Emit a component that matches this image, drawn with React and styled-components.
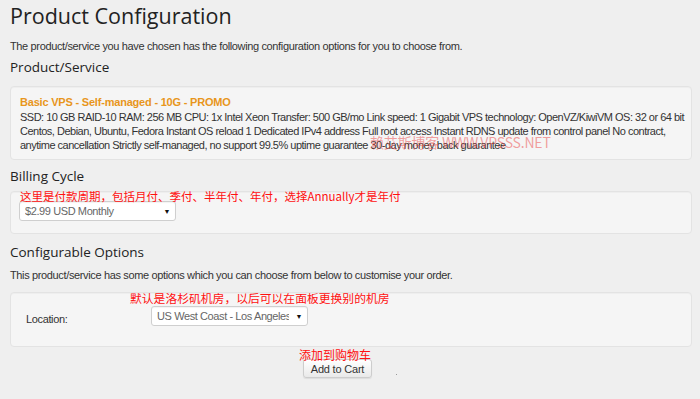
import React from "react";
import styled, { createGlobalStyle } from "styled-components";

const Global = createGlobalStyle`
  html, body { margin: 0; padding: 0; background: #efefef; }
  body { font-family: "Liberation Sans", Arial, sans-serif; font-size: 11px; color: #333; }
`;

const Page = styled.div`
  position: relative;
  width: 700px;
  height: 399px;
  box-sizing: border-box;
  padding: 0 8px 0 10px;
  overflow: hidden;
  letter-spacing: -0.36px;
`;

const Title = styled.h1`
  margin: 0;
  padding-top: 2px;
  height: 30px;
  line-height: 28px;
  font-family: "Open Sans", sans-serif;
  font-weight: 400;
  font-size: 21.5px;
  letter-spacing: 0;
  color: #222;
`;

const Para = styled.p`
  margin: ${(p) => p.$mt || 0}px 0 0;
  line-height: 14px;
  font-size: 11px;
  color: #333;
`;

const Heading = styled.h2`
  margin: ${(p) => p.$mt || 0}px 0 0;
  line-height: 18px;
  font-family: "Open Sans", sans-serif;
  font-weight: 400;
  font-size: 13.5px;
  letter-spacing: 0;
  color: #222;
`;

const Panel = styled.div`
  margin-top: ${(p) => p.$mt || 0}px;
  box-sizing: border-box;
  height: ${(p) => p.$h}px;
  background: #f5f5f5;
  border: 1px solid #e3e3e3;
  border-radius: 4px;
  padding: ${(p) => p.$pad};
  overflow: hidden;
  box-shadow: inset 0 1px 1px rgba(0, 0, 0, 0.03);
`;

const ProductName = styled.div`
  font-weight: bold;
  color: #e8961c;
  line-height: 15px;
  letter-spacing: -0.2px;
`;

const Desc = styled.div`
  line-height: 14px;
  white-space: nowrap;
  letter-spacing: -0.5px;
`;

const Select = styled.div`
  box-sizing: border-box;
  width: ${(p) => p.$w}px;
  height: 20px;
  background: #fff;
  border: 1px solid #cfcfcf;
  border-radius: 3px;
  display: flex;
  align-items: center;
  justify-content: space-between;
  padding: 0 5px 0 5px;
  font-size: 11px;
  color: #666;
  box-shadow: inset 0 1px 1px rgba(0,0,0,0.05);
`;

const SelText = styled.span`
  overflow: hidden;
  white-space: nowrap;
  letter-spacing: -0.4px;
  width: ${(p) => p.$w}px;
`;

const Arrow = styled.span`
  font-size: 7px;
  color: #111;
`;

const OptionRow = styled.div`
  display: flex;
  align-items: center;
`;

const Label = styled.span`
  width: 125px;
  padding-left: 15px;
  padding-top: 5px;
  color: #333;
`;

const Actions = styled.div`
  display: flex;
  justify-content: center;
  padding-right: 27px;
  margin-top: 12px;
`;

const Button = styled.button`
  box-sizing: border-box;
  width: 69px;
  height: 19px;
  padding: 0;
  font-family: "Liberation Sans", Arial, sans-serif;
  font-size: 11px;
  letter-spacing: -0.2px;
  color: #333;
  border: 1px solid #cdcdcd;
  border-radius: 3px;
  background: linear-gradient(#ffffff, #e9e9e9);
  box-shadow: 0 1px 1px rgba(0,0,0,0.08);
`;

const Note = styled.div`
  position: absolute;
  left: ${(p) => p.$x}px;
  top: ${(p) => p.$y}px;
  font-family: "Noto Sans CJK SC", "Liberation Sans", sans-serif;
  font-size: ${(p) => p.$fs || 12}px;
  line-height: 14px;
  letter-spacing: 0;
  color: #ff1010;
  white-space: nowrap;
`;

const Watermark = styled.div`
  position: absolute;
  left: 370px;
  top: 134px;
  font-family: "Noto Sans CJK SC", "Liberation Sans", sans-serif;
  font-size: 14px;
  line-height: 16px;
  letter-spacing: -0.2px;
  color: rgba(235, 70, 70, 0.5);
  white-space: nowrap;
`;

const Dot = styled.div`
  position: absolute;
  left: 396px;
  top: 374px;
  width: 1px;
  height: 1px;
  background: #999;
`;

export default function App() {
  return (
    <>
      <Global />
      <Page>
        <Title>Product Configuration</Title>
        <Para $mt={7}>
          The product/service you have chosen has the following configuration options for you to choose from.
        </Para>
        <Heading $mt={5}>Product/Service</Heading>
        <Panel $mt={10} $h={74} $pad="8px 9px">
          <ProductName>Basic VPS - Self-managed - 10G - PROMO</ProductName>
          <Desc>SSD: 10 GB RAID-10 RAM: 256 MB CPU: 1x Intel Xeon Transfer: 500 GB/mo Link speed: 1 Gigabit VPS technology: OpenVZ/KiwiVM OS: 32 or 64 bit</Desc>
          <Desc>Centos, Debian, Ubuntu, Fedora Instant OS reload 1 Dedicated IPv4 address Full root access Instant RDNS update from control panel No contract,</Desc>
          <Desc>anytime cancellation Strictly self-managed, no support 99.5% uptime guarantee 30-day money back guarantee</Desc>
        </Panel>
        <Heading $mt={7}>Billing Cycle</Heading>
        <Panel $mt={6} $h={43} $pad="9px 8px">
          <Select $w={157}>
            <SelText $w={130}>$2.99 USD Monthly</SelText>
            <Arrow>▼</Arrow>
          </Select>
        </Panel>
        <Heading $mt={9}>Configurable Options</Heading>
        <Para $mt={7}>
          This product/service has some options which you can choose from below to customise your order.
        </Para>
        <Panel $mt={10} $h={55} $pad="13px 0 0">
          <OptionRow>
            <Label>Location:</Label>
            <Select $w={157}>
              <SelText $w={132}>US West Coast - Los Angeles DC</SelText>
              <Arrow>▼</Arrow>
            </Select>
          </OptionRow>
        </Panel>
        <Actions>
          <Button>Add to Cart</Button>
        </Actions>
        <Dot />
        <Watermark>赖艾斯博客 WWW.VPSSS.NET</Watermark>
        <Note $x={20} $y={189} $fs={11.5}>这里是付款周期，包括月付、季付、半年付、年付，选择Annually才是年付</Note>
        <Note $x={130} $y={291} $fs={11.8}>默认是洛杉矶机房，以后可以在面板更换别的机房</Note>
        <Note $x={299} $y={348}>添加到购物车</Note>
      </Page>
    </>
  );
}
